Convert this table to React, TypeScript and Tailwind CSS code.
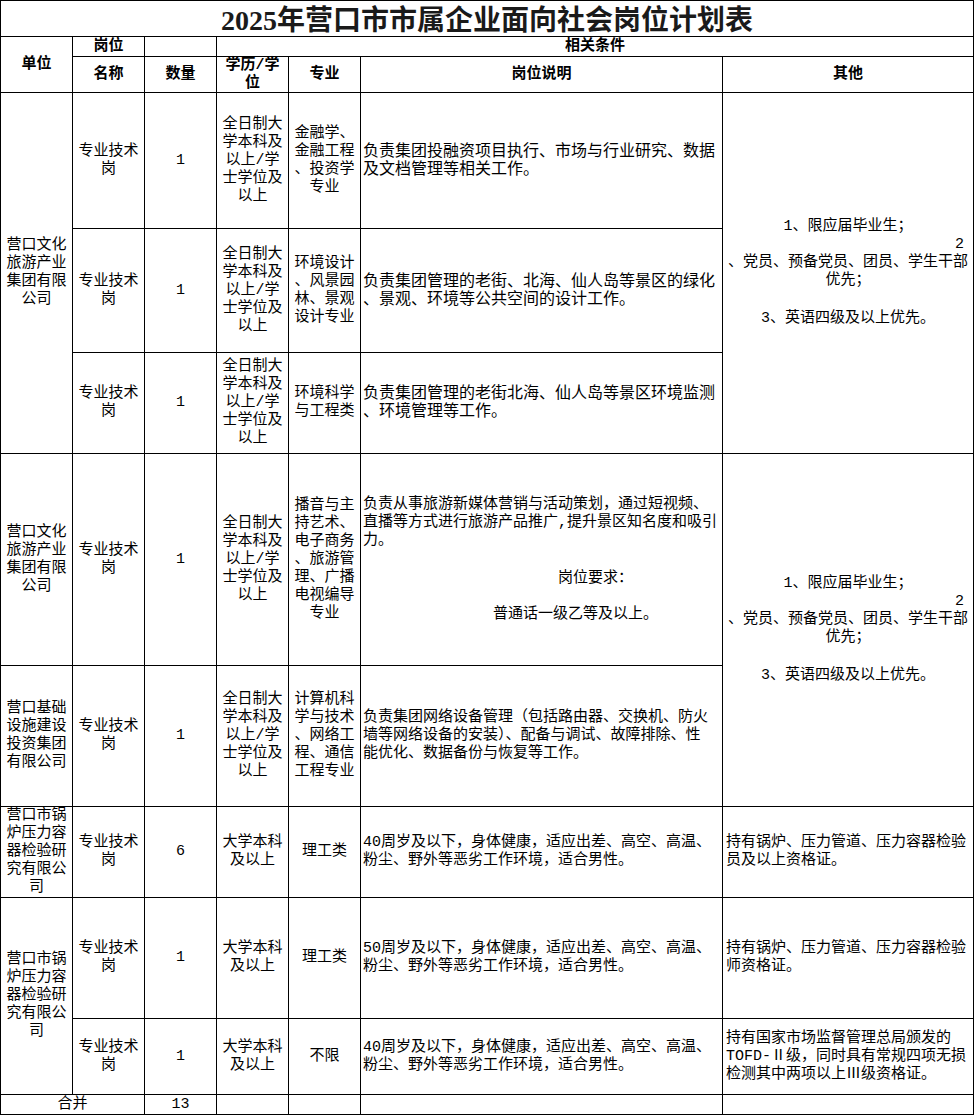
import React from "react";

const C =
  "border-r border-b border-black flex flex-col justify-center items-center text-center";
const L =
  "border-r border-b border-black flex flex-col justify-center items-start text-left pl-[2px]";
const H =
  "border-r border-b border-black flex flex-col justify-center items-center text-center font-bold";

function Lines({ lines }: { lines: string[] }) {
  return (
    <>
      {lines.map((l, i) => (
        <div key={i} className="min-h-[18px] whitespace-nowrap">
          {l}
        </div>
      ))}
    </>
  );
}

const EDU5 = ["全日制大", "学本科及", "以上/学", "士学位及", "以上"];
const EDU2 = ["大学本科", "及以上"];
const NAME = ["专业技术", "岗"];

type Row = {
  r: string;
  qty: string;
  edu: string[];
  major: string[];
  desc: string[];
  big?: boolean;
};

const rows: Row[] = [
  {
    r: "row-start-4",
    qty: "1",
    edu: EDU5,
    major: ["金融学、", "金融工程", "、投资学", "专业"],
    desc: ["负责集团投融资项目执行、市场与行业研究、数据", "及文档管理等相关工作。"],
    big: true,
  },
  {
    r: "row-start-5",
    qty: "1",
    edu: EDU5,
    major: ["环境设计", "、风景园", "林、景观", "设计专业"],
    desc: ["负责集团管理的老街、北海、仙人岛等景区的绿化", "、景观、环境等公共空间的设计工作。"],
    big: true,
  },
  {
    r: "row-start-6",
    qty: "1",
    edu: EDU5,
    major: ["环境科学", "与工程类"],
    desc: ["负责集团管理的老街北海、仙人岛等景区环境监测", "、环境管理等工作。"],
    big: true,
  },
  {
    r: "row-start-8",
    qty: "1",
    edu: EDU5,
    major: ["计算机科", "学与技术", "、网络工", "程、通信", "工程专业"],
    desc: [
      "负责集团网络设备管理（包括路由器、交换机、防火",
      "墙等网络设备的安装）、配备与调试、故障排除、性",
      "能优化、数据备份与恢复等工作。",
    ],
  },
  {
    r: "row-start-9",
    qty: "6",
    edu: EDU2,
    major: ["理工类"],
    desc: ["40周岁及以下，身体健康，适应出差、高空、高温、", "粉尘、野外等恶劣工作环境，适合男性。"],
  },
  {
    r: "row-start-10",
    qty: "1",
    edu: EDU2,
    major: ["理工类"],
    desc: ["50周岁及以下，身体健康，适应出差、高空、高温、", "粉尘、野外等恶劣工作环境，适合男性。"],
  },
  {
    r: "row-start-11",
    qty: "1",
    edu: EDU2,
    major: ["不限"],
    desc: ["40周岁及以下，身体健康，适应出差、高空、高温、", "粉尘、野外等恶劣工作环境，适合男性。"],
  },
];

function Other({ r }: { r: string }) {
  return (
    <div className={"col-start-7 " + r + " " + C}>
      <div className="w-full">
        <div className="min-h-[18px]">1、限应届毕业生；</div>
        <div className="min-h-[18px] text-right pr-[9px]">2</div>
        <div className="min-h-[18px] whitespace-nowrap">、党员、预备党员、团员、学生干部</div>
        <div className="min-h-[18px]">优先；</div>
        <div className="min-h-[18px]"></div>
        <div className="min-h-[18px] mt-[2px]">3、英语四级及以上优先。</div>
      </div>
    </div>
  );
}

export default function App() {
  return (
    <div className="w-[974px] h-[1115px] bg-white text-black overflow-hidden">
      <div className="grid grid-cols-[72px_72px_72px_72px_72px_362px_251px] grid-rows-[36px_20px_36px_136px_124px_101px_212px_141px_91px_121px_76px_20px] border-l border-t border-black w-[974px] font-['Liberation_Mono','Noto_Sans_CJK_SC',monospace] text-[15px] leading-[18px]">
        {/* title */}
        <div className="col-start-1 col-span-7 row-start-1 border-r border-b border-black flex items-center justify-center pt-[4px] font-['Liberation_Serif','Noto_Sans_CJK_SC',serif] font-bold text-[28px] leading-[32px] text-[#1a1a1a]">
          2025年营口市市属企业面向社会岗位计划表
        </div>

        {/* header */}
        <div className={"col-start-1 row-start-2 row-span-2 " + H}>单位</div>
        <div className={"col-start-2 row-start-2 " + H}>岗位</div>
        <div className={"col-start-3 row-start-2 " + H}></div>
        <div className={"col-start-4 col-span-4 row-start-2 " + H}>相关条件</div>
        <div className={"col-start-2 row-start-3 " + H}>名称</div>
        <div className={"col-start-3 row-start-3 " + H}>数量</div>
        <div className={"col-start-4 row-start-3 " + H}>
          <Lines lines={["学历/学", "位"]} />
        </div>
        <div className={"col-start-5 row-start-3 " + H}>专业</div>
        <div className={"col-start-6 row-start-3 " + H}>岗位说明</div>
        <div className={"col-start-7 row-start-3 " + H}>其他</div>

        {/* units */}
        <div className={"col-start-1 row-start-4 row-span-3 " + C}>
          <Lines lines={["营口文化", "旅游产业", "集团有限", "公司"]} />
        </div>
        <div className={"col-start-1 row-start-7 " + C}>
          <Lines lines={["营口文化", "旅游产业", "集团有限", "公司"]} />
        </div>
        <div className={"col-start-1 row-start-8 " + C}>
          <Lines lines={["营口基础", "设施建设", "投资集团", "有限公司"]} />
        </div>
        <div className={"col-start-1 row-start-9 " + C}>
          <Lines lines={["营口市锅", "炉压力容", "器检验研", "究有限公", "司"]} />
        </div>
        <div className={"col-start-1 row-start-10 row-span-2 " + C}>
          <Lines lines={["营口市锅", "炉压力容", "器检验研", "究有限公", "司"]} />
        </div>

        {/* regular rows */}
        {rows.map((row, i) => (
          <React.Fragment key={i}>
            <div className={"col-start-2 " + row.r + " " + C}>
              <Lines lines={NAME} />
            </div>
            <div className={"col-start-3 " + row.r + " " + C}>{row.qty}</div>
            <div className={"col-start-4 " + row.r + " " + C}>
              <Lines lines={row.edu} />
            </div>
            <div className={"col-start-5 " + row.r + " " + C}>
              <Lines lines={row.major} />
            </div>
            <div className={"col-start-6 " + row.r + " " + L + (row.big ? " text-[16px]" : "")}>
              <Lines lines={row.desc} />
            </div>
          </React.Fragment>
        ))}

        {/* row 4 (新媒体) */}
        <div className={"col-start-2 row-start-7 " + C}>
          <Lines lines={NAME} />
        </div>
        <div className={"col-start-3 row-start-7 " + C}>1</div>
        <div className={"col-start-4 row-start-7 " + C}>
          <Lines lines={EDU5} />
        </div>
        <div className={"col-start-5 row-start-7 " + C}>
          <Lines lines={["播音与主", "持艺术、", "电子商务", "、旅游管", "理、广播", "电视编导", "专业"]} />
        </div>
        <div className={"col-start-6 row-start-7 " + L}>
          <div className="min-h-[18px] whitespace-nowrap">负责从事旅游新媒体营销与活动策划，通过短视频、</div>
          <div className="min-h-[18px] whitespace-nowrap">直播等方式进行旅游产品推广,提升景区知名度和吸引</div>
          <div className="min-h-[18px]">力。</div>
          <div className="min-h-[18px]"></div>
          <div className="min-h-[18px] pl-[195px] mt-[2px]">岗位要求：</div>
          <div className="min-h-[18px]"></div>
          <div className="min-h-[18px] pl-[130px]">普通话一级乙等及以上。</div>
        </div>

        {/* other column */}
        <Other r="row-start-4 row-span-3" />
        <Other r="row-start-7 row-span-2" />
        <div className={"col-start-7 row-start-9 " + L + " pl-[3px]"}>
          <Lines lines={["持有锅炉、压力管道、压力容器检验", "员及以上资格证。"]} />
        </div>
        <div className={"col-start-7 row-start-10 " + L + " pl-[3px]"}>
          <Lines lines={["持有锅炉、压力管道、压力容器检验", "师资格证。"]} />
        </div>
        <div className={"col-start-7 row-start-11 " + L + " pl-[3px]"}>
          <Lines
            lines={["持有国家市场监督管理总局颁发的", "TOFD-Ⅱ级，同时具有常规四项无损", "检测其中两项以上Ⅲ级资格证。"]}
          />
        </div>

        {/* total row */}
        <div className={"col-start-1 col-span-2 row-start-12 " + C}>合并</div>
        <div className={"col-start-3 row-start-12 " + C}>13</div>
        <div className={"col-start-4 row-start-12 " + C}></div>
        <div className={"col-start-5 row-start-12 " + C}></div>
        <div className={"col-start-6 row-start-12 " + C}></div>
        <div className={"col-start-7 row-start-12 " + C}></div>
      </div>
    </div>
  );
}
